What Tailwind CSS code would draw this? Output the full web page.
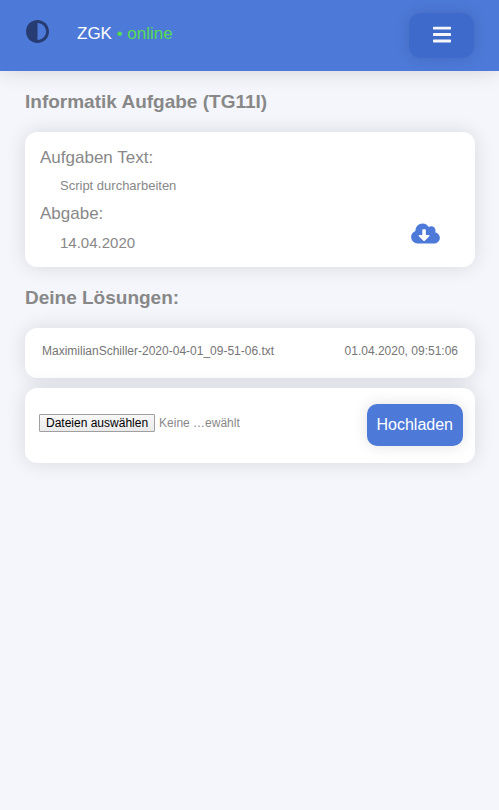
<!DOCTYPE html>
<html lang="de">
<head>
<meta charset="utf-8">
<meta name="viewport" content="width=device-width, initial-scale=1">
<title>ZGK</title>
<script src="https://cdn.jsdelivr.net/npm/@tailwindcss/browser@4"></script>
</head>
<body class="min-h-screen bg-[#f4f6fb] text-[#888888] font-['Liberation_Sans',Arial,sans-serif]">
<header class="flex items-start justify-between bg-[#4d79d8] pl-[26px] pr-[25px] pt-[13px] pb-[13px] shadow-[0_0_20px_rgba(0,0,0,0.15)]">
  <div class="flex items-start pt-[7px]">
    <button type="button" aria-label="Farbschema wechseln" class="text-[#273c72]">
      <svg class="size-[23px]" viewBox="8 8 496 496" fill="currentColor" aria-hidden="true"><path d="M8 256c0 136.966 111.033 248 248 248s248-111.034 248-248S392.966 8 256 8 8 119.033 8 256zm248 184V72c101.705 0 184 82.311 184 184 0 101.705-82.311 184-184 184z"/></svg>
    </button>
    <p class="ml-7 pt-1 text-[17px] leading-5 text-white">ZGK <span class="text-[#56dc54]">• online</span></p>
  </div>
  <button type="button" aria-label="Menü" class="flex h-[45px] w-[65px] items-center justify-center rounded-xl bg-[#3e6acb] pb-[2px] text-[#f4f6fb] shadow-[0_0_15px_rgba(0,0,0,0.12)]">
    <svg class="h-[21px] w-[18px]" viewBox="0 0 448 512" fill="currentColor" aria-hidden="true"><path d="M16 132h416c8.837 0 16-7.163 16-16V76c0-8.837-7.163-16-16-16H16C7.163 60 0 67.163 0 76v40c0 8.837 7.163 16 16 16zm0 160h416c8.837 0 16-7.163 16-16v-40c0-8.837-7.163-16-16-16H16c-8.837 0-16 7.163-16 16v40c0 8.837 7.163 16 16 16zm0 160h416c8.837 0 16-7.163 16-16v-40c0-8.837-7.163-16-16-16H16c-8.837 0-16 7.163-16 16v40c0 8.837 7.163 16 16 16z"/></svg>
  </button>
</header>
<main class="pt-5 pr-6 pl-[25px]">
  <h1 class="text-[19px] leading-[22px] font-bold">Informatik Aufgabe (TG11I)</h1>
  <section class="mt-[19px] flex items-end justify-between rounded-xl bg-white pt-4 pr-[35px] pb-[14px] pl-[15px] shadow-[0_0_20px_rgba(0,0,0,0.12)]">
    <dl>
      <dt class="text-[17px] leading-5">Aufgaben Text:</dt>
      <dd class="mt-2 ml-5 text-[13px] leading-5">Script durcharbeiten</dd>
      <dt class="mt-2 text-[17px] leading-5">Abgabe:</dt>
      <dd class="mt-[9px] ml-5 text-[15px] leading-5">14.04.2020</dd>
    </dl>
    <a href="#" aria-label="Herunterladen" class="mb-2 text-[#4d79d8]">
      <svg class="h-[23px] w-[29px]" viewBox="0 0 640 512" fill="currentColor" aria-hidden="true"><path d="M537.6 226.6c4.1-10.7 6.4-22.4 6.4-34.6 0-53-43-96-96-96-19.7 0-38.1 6-53.3 16.2C367 64.2 315.3 32 256 32c-88.4 0-160 71.6-160 160 0 2.7.1 5.4.2 8.1C40.2 219.8 0 273.2 0 336c0 79.5 64.5 144 144 144h368c70.7 0 128-57.3 128-128 0-61.9-44-113.6-102.4-125.4zm-132.9 88.7L299.3 420.7c-6.2 6.2-16.4 6.2-22.6 0L171.3 315.3c-10.1-10.1-2.9-27.3 11.3-27.3H248V176c0-8.8 7.2-16 16-16h48c8.8 0 16 7.2 16 16v112h65.4c14.2 0 21.4 17.2 11.3 27.3z"/></svg>
    </a>
  </section>
  <h2 class="mt-5 text-[19px] leading-[22px] font-bold">Deine Lösungen:</h2>
  <section class="mt-[19px] flex justify-between rounded-xl bg-white px-[17px] pt-[15px] pb-[19px] text-xs text-[#757575] shadow-[0_0_20px_rgba(0,0,0,0.12)]">
    <a href="#">MaximilianSchiller-2020-04-01_09-51-06.txt</a>
    <time datetime="2020-04-01T09:51:06">01.04.2020, 09:51:06</time>
  </section>
  <form class="mt-[10px] flex items-start justify-between rounded-xl bg-white pt-4 pr-3 pb-[17px] pl-[14px] shadow-[0_0_20px_rgba(0,0,0,0.12)]">
    <div class="relative flex items-center gap-1 pt-[10px] text-xs leading-4">
      <input id="files" type="file" multiple class="peer sr-only">
      <label for="files" class="rounded-[1px] border border-[#a0a0a0] bg-linear-to-b from-[#f8f8f8] to-[#eaeaea] px-[6px] text-black peer-focus-visible:outline-2">Dateien auswählen</label>
      <span>Keine …ewählt</span>
    </div>
    <button type="submit" class="h-[42px] rounded-[10px] bg-[#4d79d8] px-[10px] text-base text-white shadow-[0_0_15px_rgba(0,0,0,0.12)]">Hochladen</button>
  </form>
</main>
</body>
</html>
